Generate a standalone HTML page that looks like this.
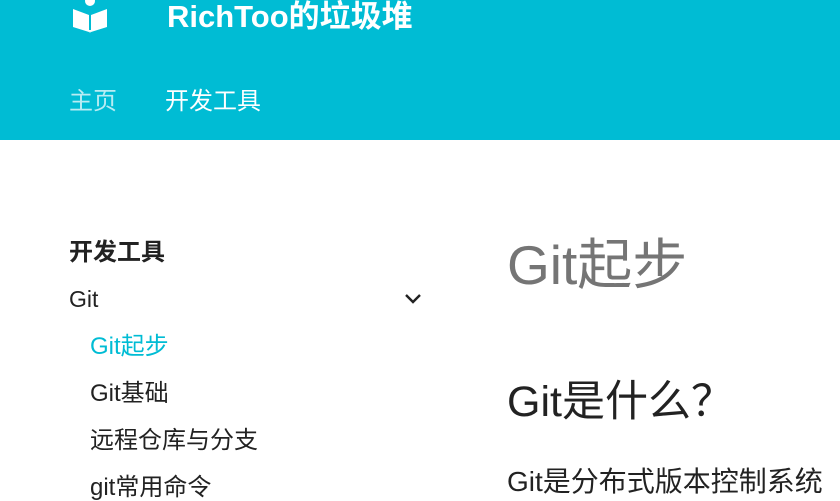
<!DOCTYPE html>
<html><head><meta charset="utf-8"><style>
*{margin:0;padding:0;box-sizing:border-box}
body{width:840px;height:498px;overflow:hidden;background:#fff;font-family:"Liberation Sans","Noto Sans CJK SC",sans-serif;color:#222;position:relative}
.hdr{position:absolute;left:0;top:0;width:840px;height:140px;background:#00bcd4}
.t{position:absolute;white-space:nowrap;line-height:1}
</style></head><body>
<div class="hdr">
<svg style="position:absolute;left:72px;top:-6px" width="36" height="40" viewBox="0 0 36 40">
<circle cx="18" cy="7" r="5" fill="#fff"/>
<path d="M1 15 L17 21 L17 38 L1 33 Z M35 15 L19 21 L19 38 L35 33 Z" fill="#fff"/>
<path d="M16 36 L18 39 L20 36 Z" fill="#fff"/>
</svg>
<div class="t" style="left:167px;top:1px;font-size:31px;font-weight:bold;color:#fff">RichToo的垃圾堆</div>
<div class="t" style="left:69px;top:90px;font-size:24px;color:rgba(255,255,255,.72)">主页</div>
<div class="t" style="left:165px;top:90px;font-size:24px;color:#fff">开发工具</div>
</div>
<div class="t" style="left:69px;top:241px;font-size:24px;font-weight:bold;color:#222">开发工具</div>
<div class="t" style="left:69px;top:288px;font-size:23px;color:#222">Git</div>
<svg style="position:absolute;left:404px;top:293px" width="18" height="12" viewBox="0 0 18 12"><path d="M2 2 L9 9 L16 2" fill="none" stroke="#222" stroke-width="2.4"/></svg>
<div class="t" style="left:90px;top:335px;font-size:24px;color:#00bcd4">Git起步</div>
<div class="t" style="left:90px;top:382px;font-size:24px;color:#222">Git基础</div>
<div class="t" style="left:90px;top:429px;font-size:24px;color:#222">远程仓库与分支</div>
<div class="t" style="left:90px;top:476px;font-size:24px;color:#222">git常用命令</div>
<div class="t" style="left:507px;top:238px;font-size:55px;color:#757575">Git起步</div>
<div class="t" style="left:507px;top:381px;font-size:43px;color:#222">Git是什么？</div>
<div class="t" style="left:507px;top:468px;font-size:28px;color:#222">Git是分布式版本控制系统</div>
</body></html>
